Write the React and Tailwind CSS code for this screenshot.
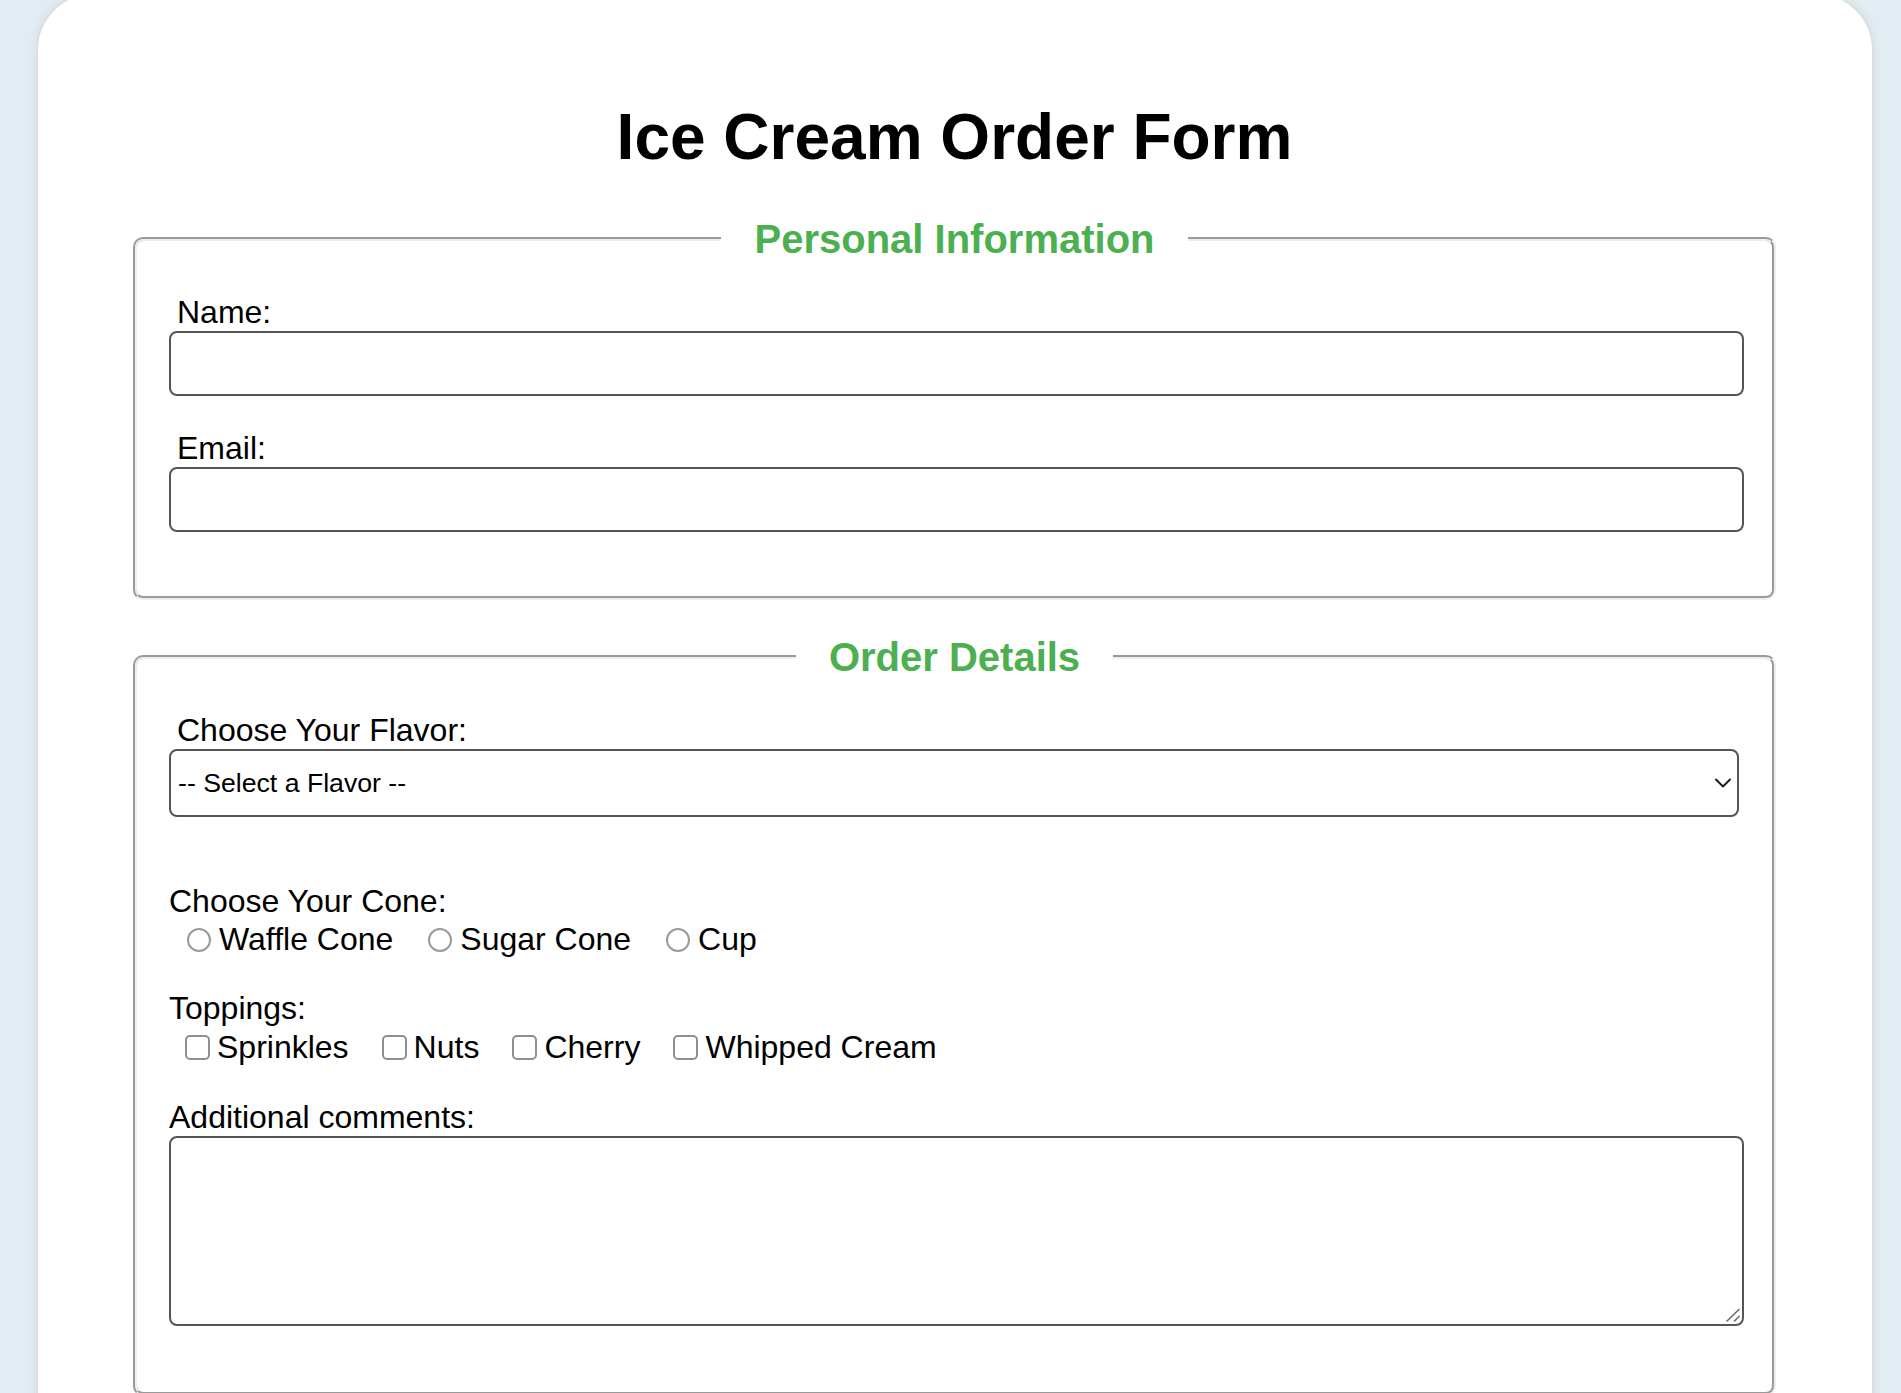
import React from "react";

const font = "font-['Liberation_Sans',Arial,Helvetica,sans-serif]";

function Radio({ label }) {
  return (
    <label className="flex items-center">
      <input
        type="radio"
        name="cone"
        className="appearance-none w-[24px] h-[24px] rounded-full border-2 border-[#9a9a9a] bg-white mr-[8px] shrink-0"
      />
      <span>{label}</span>
    </label>
  );
}

function Check({ label }) {
  return (
    <label className="flex items-center">
      <input
        type="checkbox"
        className="appearance-none w-[25px] h-[25px] rounded-[5px] border-2 border-[#8f8f8f] bg-white mr-[7px] shrink-0"
      />
      <span>{label}</span>
    </label>
  );
}

export default function App() {
  return (
    <div className={`min-h-[1393px] bg-[#e1edf3] overflow-hidden ${font} text-black`}>
      <div className="ml-[36px] -mt-[8px] w-[1838px] bg-white border-2 border-[#dedede] rounded-[58px] shadow-[0_0_12px_rgba(0,0,0,0.06)] pt-[106px] pl-[95px] pr-[96px] pb-[120px]">
        <h1 className="text-center text-[64px] leading-[74px] font-bold mb-[42px]">
          Ice Cream Order Form
        </h1>

        <fieldset className="min-w-0 border-4 [border-style:groove] border-[#eeeeee] rounded-[10px] px-[32px] pt-[32px] pb-[64px]">
          <legend className="mx-auto px-[33px] text-[40px] leading-[46px] font-bold text-[#4caf50]">
            Personal Information
          </legend>
          <label className="block pl-[8px] text-[32px] leading-[37px]">Name:</label>
          <input
            type="text"
            className="block w-[1575px] h-[65px] border-2 border-[#555555] rounded-[8px] bg-white"
          />
          <label className="block pl-[8px] mt-[34px] text-[32px] leading-[37px]">Email:</label>
          <input
            type="email"
            className="block w-[1575px] h-[65px] border-2 border-[#555555] rounded-[8px] bg-white"
          />
        </fieldset>

        <fieldset className="min-w-0 mt-[34px] border-4 [border-style:groove] border-[#eeeeee] rounded-[10px] px-[32px] pt-[32px] pb-[66px]">
          <legend className="mx-auto px-[33px] text-[40px] leading-[46px] font-bold text-[#4caf50]">
            Order Details
          </legend>
          <label className="block pl-[8px] text-[32px] leading-[37px]">Choose Your Flavor:</label>
          <div className="relative w-[1570px]">
            <select className="appearance-none block w-full h-[68px] border-2 border-[#555555] rounded-[8px] bg-white pl-[7px] text-[26.67px] text-black">
              <option>-- Select a Flavor --</option>
              <option>Vanilla</option>
              <option>Chocolate</option>
              <option>Strawberry</option>
            </select>
            <svg
              className="absolute right-[8px] top-1/2 -translate-y-1/2 pointer-events-none"
              width="16"
              height="10"
              viewBox="0 0 16 10"
              fill="none"
            >
              <path d="M1 1.5 L8 8.5 L15 1.5" stroke="#1e1e1e" strokeWidth="2" strokeLinecap="round" strokeLinejoin="round" />
            </svg>
          </div>

          <div className="mt-[66px] text-[32px] leading-[37px]">Choose Your Cone:</div>
          <div className="mt-[1px] ml-[18px] flex items-center gap-[35px] h-[37px] text-[32px] leading-[37px]">
            <Radio label="Waffle Cone" />
            <Radio label="Sugar Cone" />
            <Radio label="Cup" />
          </div>

          <div className="mt-[32px] text-[32px] leading-[37px]">Toppings:</div>
          <div className="mt-[2px] ml-[16px] flex items-center gap-[33px] h-[37px] text-[32px] leading-[37px]">
            <Check label="Sprinkles" />
            <Check label="Nuts" />
            <Check label="Cherry" />
            <Check label="Whipped Cream" />
          </div>

          <div className="mt-[33px] text-[32px] leading-[37px]">Additional comments:</div>
          <div className="relative w-[1575px]">
            <textarea className="block w-full h-[190px] border-2 border-[#555555] rounded-[8px] bg-white resize-none" />
            <svg
              className="absolute right-[3px] bottom-[3px] pointer-events-none"
              width="16"
              height="16"
              viewBox="0 0 16 16"
              fill="none"
            >
              <path d="M1.5 14.5 L14.5 2" stroke="#666" strokeWidth="1.5" />
              <path d="M9 14.5 L14.5 9" stroke="#666" strokeWidth="1.5" />
            </svg>
          </div>
        </fieldset>
      </div>
    </div>
  );
}
